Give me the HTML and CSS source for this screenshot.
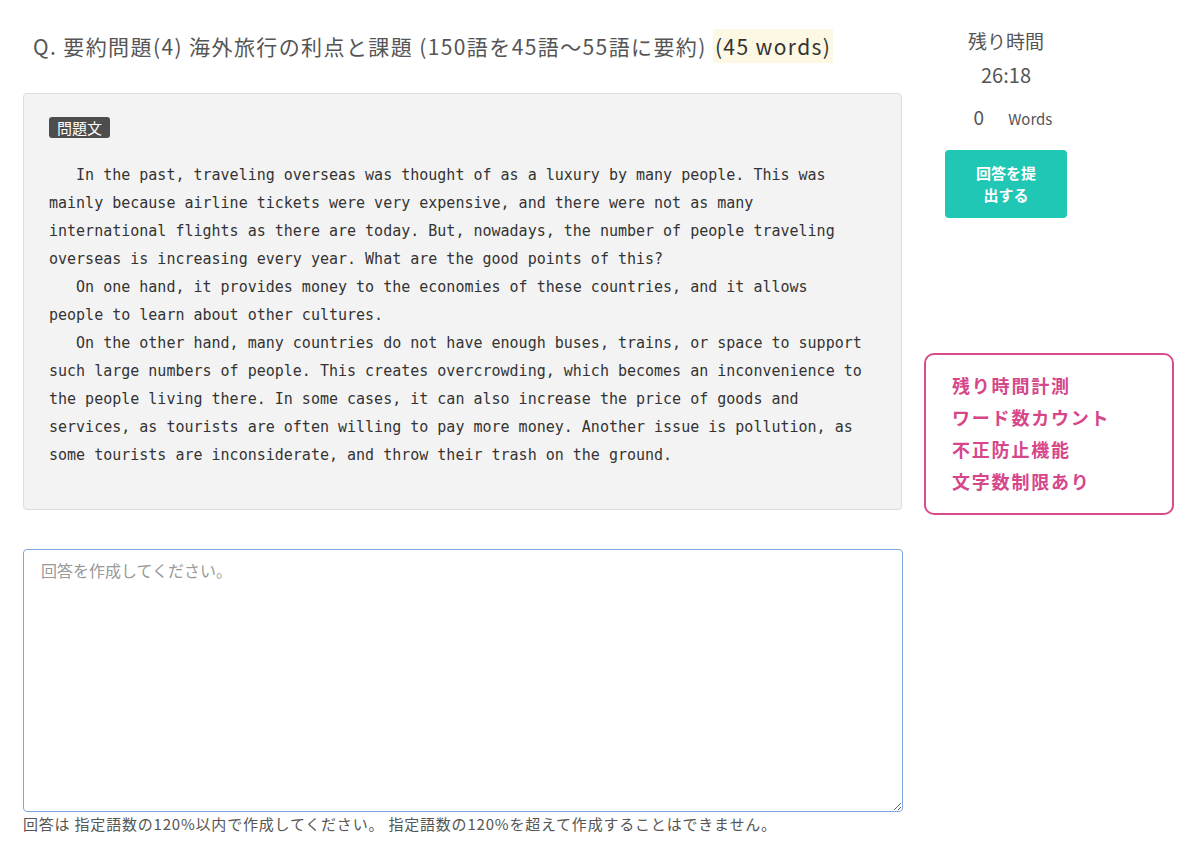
FILE: index.html
```html
<!DOCTYPE html>
<html lang="ja">
<head>
    <meta charset="UTF-8" />
    <title>要約問題</title>
    <link rel="stylesheet" href="styles.css">
</head>
<body>
<div class="page">
    <!-- 問題と回答 -->
    <div class="main-col">
        <h1 class="q-title">Q. 要約問題(4) 海外旅行の利点と課題 (150語を45語〜55語に要約) <span class="word-limit">(45 words)</span></h1>

        <div class="passage-box">
            <span class="tag">問題文</span>
            <div class="passage">
                <p>   In the past, traveling overseas was thought of as a luxury by many people. This was mainly because airline tickets were very expensive, and there were not as many international flights as there are today. But, nowadays, the number of people traveling overseas is increasing every year. What are the good points of this?</p>
                <p>   On one hand, it provides money to the economies of these countries, and it allows people to learn about other cultures.</p>
                <p>   On the other hand, many countries do not have enough buses, trains, or space to support such large numbers of people. This creates overcrowding, which becomes an inconvenience to the people living there. In some cases, it can also increase the price of goods and services, as tourists are often willing to pay more money. Another issue is pollution, as some tourists are inconsiderate, and throw their trash on the ground.</p>
            </div>
        </div>

        <textarea class="answer" placeholder="回答を作成してください。"></textarea>
        <div class="note">回答は 指定語数の120%以内で作成してください。 指定語数の120%を超えて作成することはできません。</div>
    </div>

    <!-- タイマー -->
    <div class="side-col">
        <div class="timer">
            <div class="timer-label">残り時間</div>
            <div class="timer-value">26:18</div>
            <div class="count"><span class="count-num">0</span><span class="count-unit">Words</span></div>
            <button type="button" class="submit-btn">回答を提出する</button>
        </div>

        <div class="feature-box">
            <div>残り時間計測</div>
            <div>ワード数カウント</div>
            <div>不正防止機能</div>
            <div>文字数制限あり</div>
        </div>
    </div>
</div>
</body>
</html>
```

FILE: styles.css
```css
body {
    margin: 0;
    font-family: "Noto Sans CJK JP", "Noto Sans", sans-serif;
    color: #555;
    background: #fff;
}
.page {
    display: flex;
    padding: 0 5px 0 23px;
    gap: 22px;
}
.main-col {
    width: 879px;
    flex-shrink: 0;
}
.q-title {
    margin: 30px 0 0 10px;
    font-size: 21px;
    font-weight: normal;
    letter-spacing: 1.4px;
    line-height: 32px;
    color: #555;
}
.word-limit {
    background: #fcf8e3;
    color: #333;
    padding: 2px 2px;
}
.passage-box {
    margin-top: 31px;
    background: #f3f3f3;
    border: 1px solid #ddd;
    border-radius: 4px;
    padding: 21px 36px 40px 25px;
}
.tag {
    display: inline-block;
    background: #4d4d4d;
    color: #fff;
    font-size: 15px;
    line-height: 21px;
    padding: 0 8px;
    border-radius: 3px;
}
.passage {
    margin-top: 22px;
    font-family: "DejaVu Sans Mono", "Liberation Mono", monospace;
    font-size: 15px;
    line-height: 28px;
    color: #333;
}
.passage p {
    margin: 0;
    white-space: pre-wrap;
}
.answer {
    display: block;
    box-sizing: border-box;
    width: 880px;
    height: 263px;
    margin-top: 39px;
    padding: 8px 17px;
    border: 1px solid #7ea6e0;
    border-radius: 4px;
    font-family: "Noto Sans CJK JP", sans-serif;
    font-size: 16px;
    color: #333;
    outline: none;
}
.answer::placeholder {
    color: #999;
}
.note {
    margin-top: 1px;
    font-size: 15px;
    letter-spacing: 0.8px;
    color: #555;
}
.side-col {
    width: 250px;
}
.timer {
    width: 122px;
    margin-left: 21px;
    text-align: center;
}
.timer-label {
    margin-top: 28px;
    font-size: 19px;
    line-height: 26px;
}
.timer-value {
    margin-top: 8px;
    font-size: 20px;
    line-height: 26px;
}
.count {
    margin-top: 16px;
    padding-left: 14px;
    line-height: 26px;
}
.count-num {
    font-size: 19px;
}
.count-unit {
    font-size: 15px;
    margin-left: 24px;
}
.submit-btn {
    margin-top: 18px;
    width: 122px;
    height: 68px;
    background: #20c7b4;
    border: none;
    border-radius: 4px;
    color: #fff;
    font-family: "Noto Sans CJK JP", sans-serif;
    font-size: 15px;
    font-weight: bold;
    line-height: 22px;
    padding: 0 28px;
    cursor: pointer;
}
.feature-box {
    margin-top: 135px;
    border: 2px solid #d94b8c;
    border-radius: 10px;
    padding: 14px 20px 16px 26px;
    color: #d6478a;
    font-size: 18px;
    font-weight: bold;
    letter-spacing: 1.8px;
    line-height: 32px;
}
```
